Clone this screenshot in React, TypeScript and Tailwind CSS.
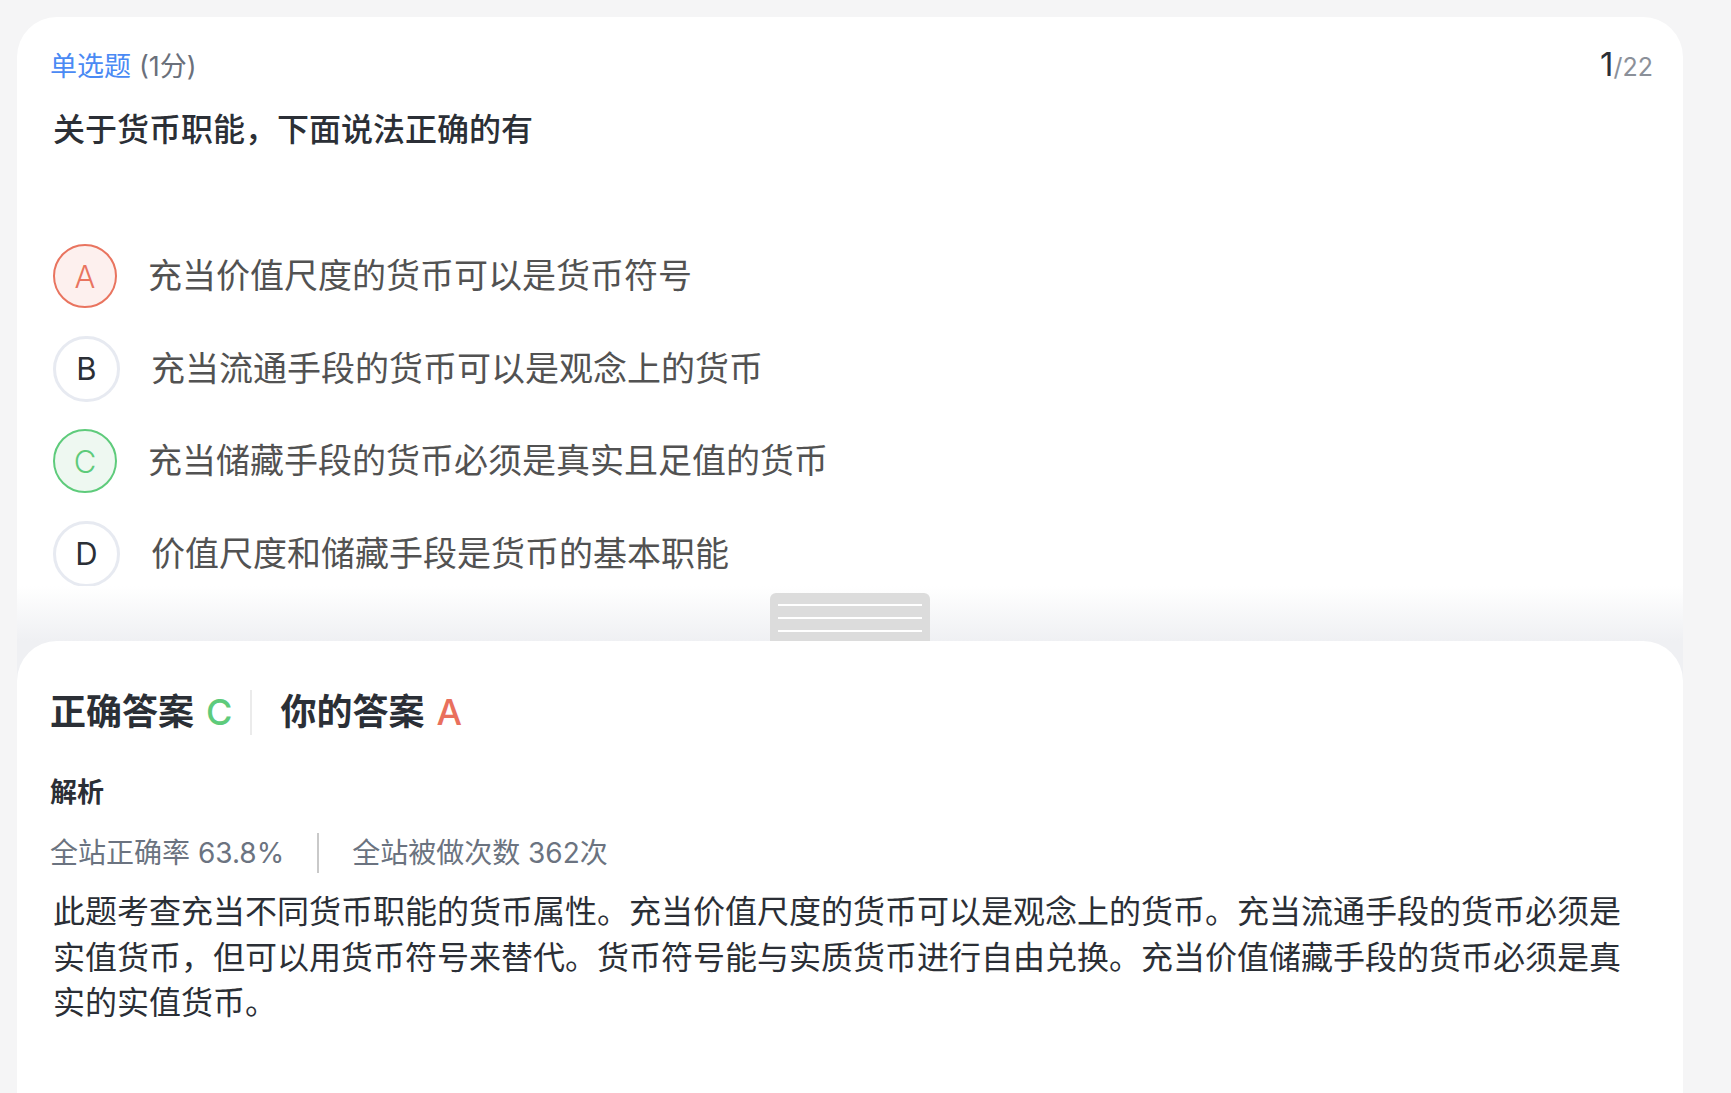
import React from 'react';

type OptionState = 'wrong' | 'right' | 'idle';

const options: { key: string; text: string; state: OptionState }[] = [
  { key: 'A', text: '充当价值尺度的货币可以是货币符号', state: 'wrong' },
  { key: 'B', text: '充当流通手段的货币可以是观念上的货币', state: 'idle' },
  { key: 'C', text: '充当储藏手段的货币必须是真实且足值的货币', state: 'right' },
  { key: 'D', text: '价值尺度和储藏手段是货币的基本职能', state: 'idle' },
];

const OptionRow = ({ opt }: { opt: (typeof options)[number] }) => {
  const circle =
    opt.state === 'wrong'
      ? 'w-[64px] h-[64px] border-2 border-[#e9745f] bg-[#fdf0ee] text-[#e9745f] font-light'
      : opt.state === 'right'
        ? 'w-[64px] h-[64px] border-2 border-[#5ecb7b] bg-[#eef8f1] text-[#5ecb7b] font-light'
        : 'w-[67px] h-[66px] border-[3px] border-[#e7eaf1] bg-white text-[#2b2f36]';

  return (
    <div className="flex items-center h-[64px] gap-[31px]">
      <div className={`shrink-0 rounded-full flex items-center justify-center text-[31px] leading-none ${circle}`}>
        {opt.key}
      </div>
      <span className="text-[34px] leading-[44px] text-[#525252]">{opt.text}</span>
    </div>
  );
};

export default function App() {
  return (
    <div className="min-h-screen h-[1093px] flex flex-col bg-[#f5f5f6] pt-[17px] font-[family-name:Inter,'Noto_Sans_CJK_SC',sans-serif] overflow-hidden">
      {/* question card */}
      <div className="ml-[17px] w-[1666px] bg-white rounded-t-[40px] flex flex-col">
        <div className="pl-[33px] pr-[30px] pt-[29px]">
          <div className="flex items-baseline justify-between h-[36px]">
            <div className="text-[27px] leading-[36px]">
              <span className="text-[#4a8af4]">单选题</span>
              <span className="text-[#6a707b] ml-[8px]">(1分)</span>
            </div>
            <div className="leading-[36px]">
              <span className="text-[33px] text-[#2b2f36]">1</span>
              <span className="text-[25px] text-[#8b9099]">/22</span>
            </div>
          </div>

          <h1 className="mt-[26px] ml-[3px] text-[32px] leading-[44px] font-medium text-[#2b2f36]">
            关于货币职能，下面说法正确的有
          </h1>

          <div className="mt-[92px] ml-[3px] flex flex-col gap-[28.5px]">
            {options.map((o) => (
              <OptionRow key={o.key} opt={o} />
            ))}
          </div>
        </div>

        {/* drag strip */}
        <div className="h-[55.5px] bg-gradient-to-b from-white to-[#eff0f3] flex items-end justify-center">
          <div className="w-[160px] h-[48px] bg-[#dcdcdc] rounded-t-[6px] flex flex-col gap-[11px] px-[8px] pt-[11px]">
            <div className="h-[2px] bg-white" />
            <div className="h-[2px] bg-white" />
            <div className="h-[2px] bg-white" />
          </div>
        </div>
      </div>

      {/* answer card */}
      <div className="ml-[17px] w-[1666px] flex-1 bg-[#eff0f3]">
        <div className="h-full bg-white rounded-t-[40px] pl-[33px] pr-[36px] pt-[47px]">
          <div className="flex items-center h-[48px] text-[36px] font-bold">
            <span className="text-[#2b2f36]">正确答案</span>
            <span className="ml-[12px] text-[#5ecb7b] font-medium">C</span>
            <div className="ml-[18px] w-[2px] h-[45px] bg-[#ebebeb]" />
            <span className="ml-[28px] text-[#2b2f36]">你的答案</span>
            <span className="ml-[12px] text-[#e9705d] font-medium">A</span>
          </div>

          <div className="mt-[39px] text-[27px] leading-[36px] font-bold text-[#2b2f36]">解析</div>

          <div className="mt-[22px] flex items-center h-[40px] text-[28px] text-[#6b7380]">
            <span>全站正确率 63.8%</span>
            <div className="mx-[33px] w-[2px] h-[40px] bg-[#c9c9c9]" />
            <span>全站被做次数 362次</span>
          </div>

          <p className="mt-[16px] ml-[3px] text-[32px] leading-[45.5px] text-[#2b2f36]">
            此题考查充当不同货币职能的货币属性。充当价值尺度的货币可以是观念上的货币。充当流通手段的货币必须是实值货币，但可以用货币符号来替代。货币符号能与实质货币进行自由兑换。充当价值储藏手段的货币必须是真实的实值货币。
          </p>
        </div>
      </div>
    </div>
  );
}
